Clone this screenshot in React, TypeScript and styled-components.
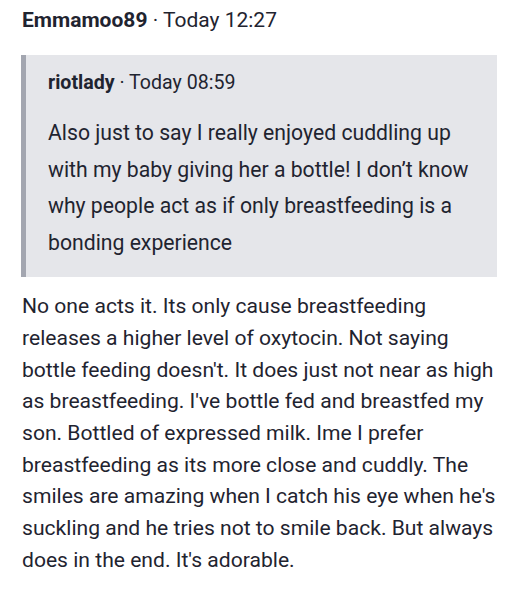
import React from "react";
import styled, { createGlobalStyle } from "styled-components";

const GlobalStyle = createGlobalStyle`
  html, body {
    margin: 0;
    padding: 0;
    background: #ffffff;
  }
  body {
    font-family: Roboto, "Liberation Sans", sans-serif;
    color: #1f2430;
  }
`;

const Post = styled.article`
  padding: 6px 18px 0 22px;
`;

const Meta = styled.div<{ $size: number; $height: number }>`
  font-size: ${(p) => p.$size}px;
  line-height: ${(p) => p.$height}px;
  color: #1f2430;
`;

const Author = styled.span`
  font-weight: 700;
`;

const Quote = styled.blockquote`
  margin: 20px 3px 13px -1px;
  background: #e5e6ea;
  border-left: 5px solid #a3a6b0;
  padding: 13.5px 21px 15.5px 22px;
`;

const QuoteText = styled.p`
  margin: 19px 0 0;
  font-size: 21.2px;
  line-height: 36.7px;
`;

const Body = styled.p`
  margin: 0;
  font-size: 21.1px;
  line-height: 31.67px;
`;

export default function App() {
  return (
    <>
      <GlobalStyle />
      <Post>
        <Meta $size={21} $height={29.4}>
          <Author>Emmamoo89</Author> · Today 12:27
        </Meta>
        <Quote>
          <Meta $size={19.6} $height={27}>
            <Author>riotlady</Author> · Today 08:59
          </Meta>
          <QuoteText>
            Also just to say I really enjoyed cuddling up with my baby giving
            her a bottle! I don’t know why people act as if only breastfeeding
            is a bonding experience
          </QuoteText>
        </Quote>
        <Body>
          No one acts it. Its only cause breastfeeding releases a higher level
          of oxytocin. Not saying bottle feeding doesn't. It does just not near
          as high as breastfeeding. I've bottle fed and breastfed my son.
          Bottled of expressed milk. Ime I prefer breastfeeding as its more
          close and cuddly. The smiles are amazing when I catch his eye when
          he's suckling and he tries not to smile back. But always does in the
          end. It's adorable.
        </Body>
      </Post>
    </>
  );
}
